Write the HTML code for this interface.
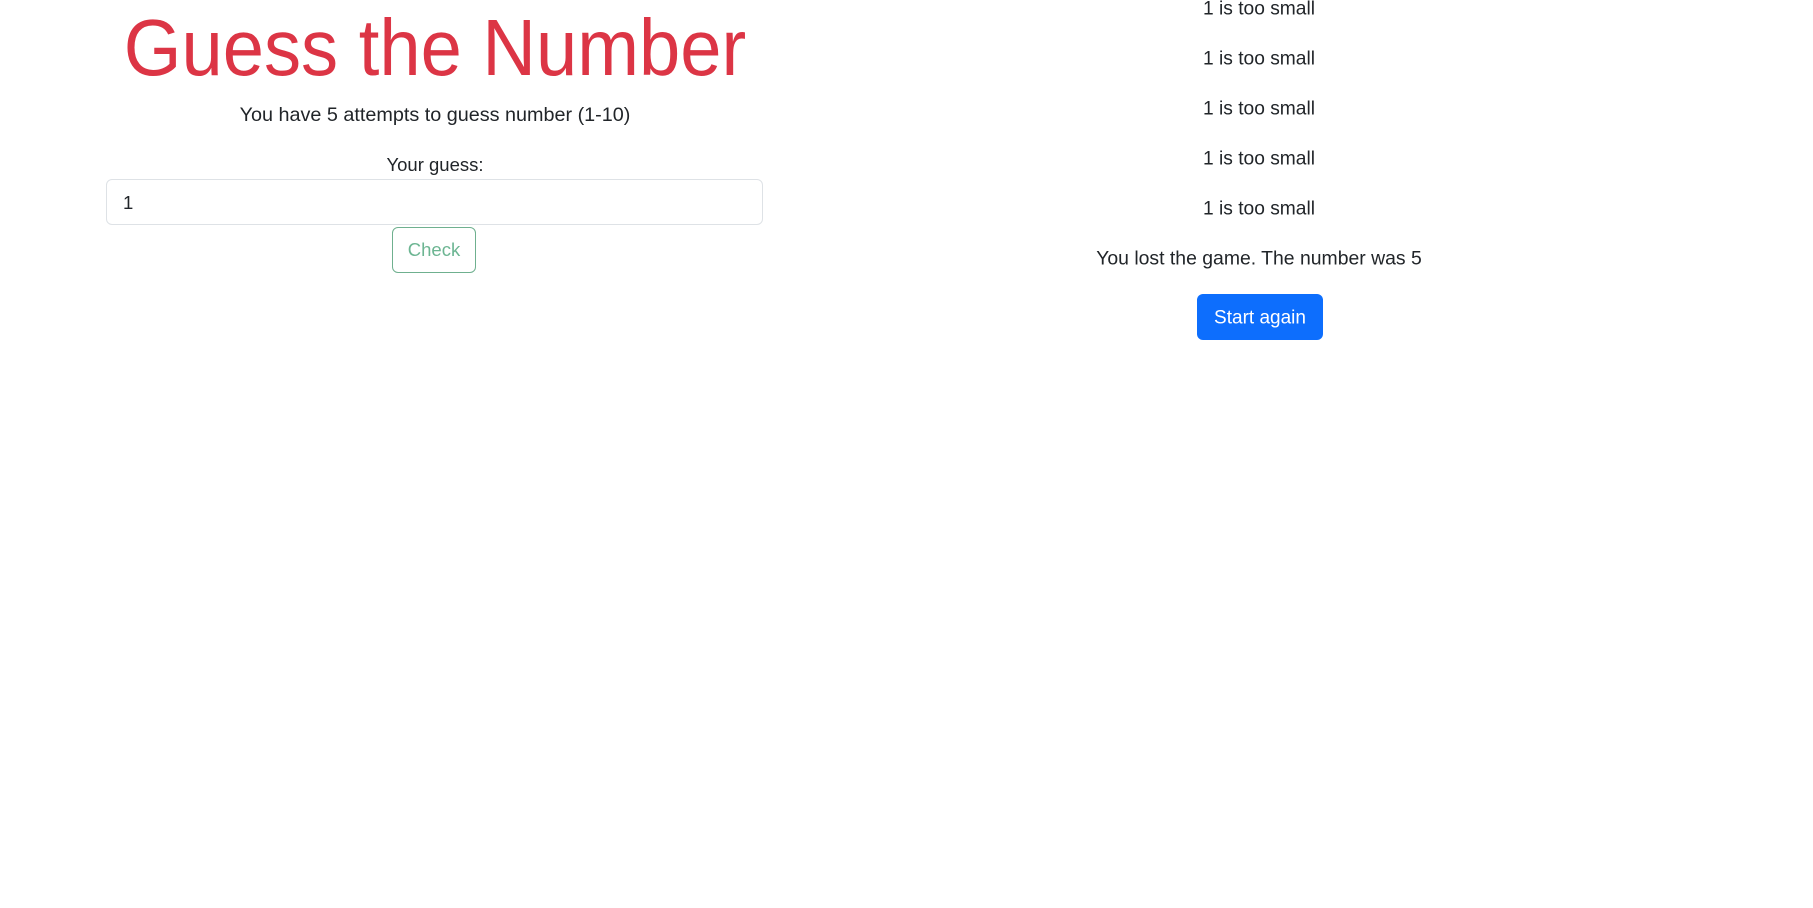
<!DOCTYPE html>
<html><head><meta charset="utf-8"><style>
html,body{margin:0;padding:0;background:#fff;width:1813px;height:908px;overflow:hidden;font-family:"Liberation Sans",sans-serif;color:#212529}
.a{position:absolute;white-space:nowrap;line-height:1}
.c{transform:translate(-50%,-50%)}
</style></head><body>
<div class="a" style="left:435px;top:48px;transform:translate(-50%,-50%) scaleX(0.927);font-size:80px;color:#dc3545;">Guess the Number</div>
<div class="a c" style="left:435px;top:116px;font-size:19.8px;">You have 5 attempts to guess number (1-10)</div>
<div class="a c" style="left:435px;top:165px;font-size:18.5px;">Your guess:</div>
<div style="position:absolute;left:106px;top:179px;width:655px;height:44px;border:1px solid #dee2e6;border-radius:6px;box-sizing:content-box;"></div>
<div class="a" style="left:123px;top:194px;font-size:18.5px;">1</div>
<div style="position:absolute;left:392px;top:227px;width:82px;height:44px;border:1px solid #6fb08f;border-radius:6px;"></div>
<div class="a c" style="left:434px;top:250px;font-size:18.5px;color:#6cb592;">Check</div>
<div class="a c" style="left:1259px;top:9px;font-size:19.2px;">1 is too small</div>
<div class="a c" style="left:1259px;top:59px;font-size:19.2px;">1 is too small</div>
<div class="a c" style="left:1259px;top:109px;font-size:19.2px;">1 is too small</div>
<div class="a c" style="left:1259px;top:159px;font-size:19.2px;">1 is too small</div>
<div class="a c" style="left:1259px;top:209px;font-size:19.2px;">1 is too small</div>
<div class="a c" style="left:1259px;top:259px;font-size:19.4px;">You lost the game. The number was 5</div>
<div style="position:absolute;left:1197px;top:294px;width:126px;height:46px;background:#0d6efd;border-radius:6px;"></div>
<div class="a c" style="left:1260px;top:318px;font-size:19px;color:#fff;">Start again</div>
</body></html>
